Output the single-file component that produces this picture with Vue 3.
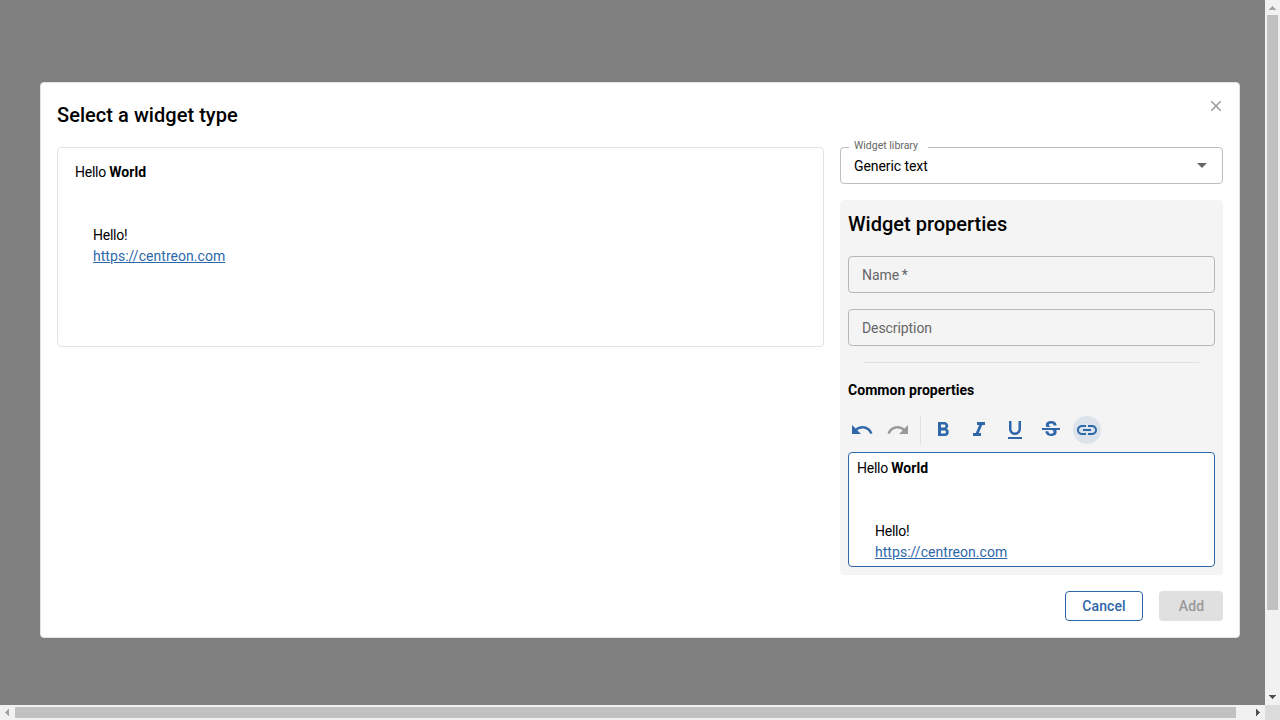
<script setup>
const icons = {
  undo: 'M12.5 8c-2.65 0-5.05.99-6.9 2.6L2 7v9h9l-3.62-3.62c1.39-1.16 3.16-1.88 5.12-1.88 3.54 0 6.55 2.31 7.6 5.5l2.37-.78C21.08 11.03 17.15 8 12.5 8z',
  redo: 'M18.4 10.6C16.55 8.99 14.15 8 11.5 8c-4.65 0-8.58 3.03-9.96 7.22L3.9 16c1.05-3.19 4.05-5.5 7.6-5.5 1.95 0 3.73.72 5.12 1.88L13 16h9V7l-3.6 3.6z',
}
const formats = [
  { name: 'Bold', d: 'M15.6 10.79c.97-.67 1.65-1.77 1.65-2.79 0-2.26-1.75-4-4-4H7v14h7.04c2.09 0 3.71-1.7 3.71-3.79 0-1.52-.86-2.82-2.15-3.42zM10 6.5h3c.83 0 1.5.67 1.5 1.5s-.67 1.5-1.5 1.5h-3v-3zm3.5 9H10v-3h3.5c.83 0 1.5.67 1.5 1.5s-.67 1.5-1.5 1.5z' },
  { name: 'Italic', d: 'M10 4v3h2.21l-3.42 8H6v3h8v-3h-2.21l3.42-8H18V4z' },
  { name: 'Underline', d: 'M12 17c3.31 0 6-2.69 6-6V3h-2.5v8c0 1.93-1.57 3.5-3.5 3.5S8.5 12.93 8.5 11V3H6v8c0 3.31 2.69 6 6 6zm-7 2v2h14v-2H5z' },
  { name: 'Strikethrough', d: 'M6.85 7.08C6.85 4.37 9.45 3 12.24 3c1.64 0 3 .49 3.9 1.28.77.65 1.46 1.73 1.46 3.24h-3.01c0-.31-.05-.59-.15-.85-.29-.86-1.2-1.28-2.25-1.28-1.86 0-2.34 1.02-2.34 1.7 0 .48.25.88.74 1.21.38.25.77.48 1.41.7H7.39c-.21-.34-.54-.89-.54-1.92zM21 12v-2H3v2h9.62c1.15.45 1.96.75 1.96 1.97 0 1-.81 1.67-2.28 1.67-1.54 0-2.93-.54-2.93-2.51H6.4c0 .55.08 1.13.24 1.58.81 2.29 3.29 3.3 5.67 3.3 2.27 0 5.3-.89 5.3-4.05 0-.3-.01-1.16-.48-1.94H21V12z' },
  { name: 'Link', active: true, d: 'M3.9 12c0-1.71 1.39-3.1 3.1-3.1h4V7H7c-2.76 0-5 2.24-5 5s2.24 5 5 5h4v-1.9H7c-1.71 0-3.1-1.39-3.1-3.1zM8 13h8v-2H8v2zm9-6h-4v1.9h4c1.71 0 3.1 1.39 3.1 3.1s-1.39 3.1-3.1 3.1h-4V17h4c2.76 0 5-2.24 5-5s-2.24-5-5-5z' },
]
</script>

<template>
  <div class="screen">
    <main class="backdrop">
      <section class="modal">
        <button class="close" aria-label="Close">
          <svg viewBox="0 0 24 24"><path d="M19 6.41 17.59 5 12 10.59 6.41 5 5 6.41 10.59 12 5 17.59 6.41 19 12 13.41 17.59 19 19 17.59 13.41 12z" /></svg>
        </button>
        <h2 class="title">Select a widget type</h2>
        <div class="content">
          <div class="preview rich">
            <p>Hello <strong>World</strong></p>
            <p class="blank"></p>
            <p class="blank"></p>
            <p class="indent">Hello!</p>
            <p class="indent"><a>https://centreon.com</a></p>
          </div>
          <div class="side">
            <div class="select">
              <span class="label">Widget library</span>
              <span class="value">Generic text</span>
              <svg class="arrow" viewBox="0 0 24 24"><path d="M7 10l5 5 5-5z" /></svg>
            </div>
            <div class="panel">
              <h2 class="panel-title">Widget properties</h2>
              <div class="field">Name<span class="star">&#8201;*</span></div>
              <div class="field">Description</div>
              <hr class="divider" />
              <h3 class="subtitle">Common properties</h3>
              <div class="toolbar">
                <button class="tool" aria-label="Undo"><svg viewBox="0 0 24 24"><path :d="icons.undo" /></svg></button>
                <button class="tool off" aria-label="Redo"><svg viewBox="0 0 24 24"><path :d="icons.redo" /></svg></button>
                <span class="separator"></span>
                <button v-for="f in formats" :key="f.name" class="tool" :class="{ active: f.active }" :aria-label="f.name">
                  <svg viewBox="0 0 24 24"><path :d="f.d" /></svg>
                </button>
              </div>
              <div class="editor rich">
                <p>Hello <strong>World</strong></p>
                <p class="blank"></p>
                <p class="blank"></p>
                <p class="indent">Hello!</p>
                <p class="indent"><a>https://centreon.com</a></p>
              </div>
            </div>
          </div>
        </div>
        <footer class="actions">
          <button class="btn outlined">Cancel</button>
          <button class="btn disabled">Add</button>
        </footer>
      </section>
    </main>
    <div class="bar vertical">
      <svg viewBox="0 0 15 15"><path fill="#a3a3a3" d="M7 6h1v1h1v1h1v1h1v1H4V9h1V8h1V7h1z" /></svg>
      <i class="thumb"></i>
      <svg viewBox="0 0 15 15"><path fill="#505050" d="M4 5h7v1h-1v1H9v1H8v1H7V8H6V7H5V6H4z" /></svg>
    </div>
    <div class="bar horizontal">
      <svg viewBox="0 0 15 15"><path fill="#a3a3a3" d="M9 4v7H8v-1H7V9H6V8H5V7h1V6h1V5h1V4z" /></svg>
      <i class="thumb"></i>
      <svg viewBox="0 0 15 15"><path fill="#505050" d="M6 4v7h1v-1h1V9h1V8h1V7H9V6H8V5H7V4z" /></svg>
    </div>
    <div class="corner"></div>
  </div>
</template>

<style>
html, body { margin: 0; overflow: hidden; }
</style>

<style scoped>
* { box-sizing: border-box; }
.screen {
  display: grid;
  grid-template: 705px 15px / 1265px 15px;
  width: 1280px;
  height: 720px;
  font: 400 14px/21px Roboto, sans-serif;
  color: #000;
}
.backdrop { background: #808080; padding: 82px 0 0 40px; min-width: 0; }
.modal {
  position: relative;
  width: 1200px;
  height: 556px;
  padding: 16px;
  background: #fff;
  border: 1px solid #e3e3e3;
  border-radius: 4px;
}
h2, h3, p { margin: 0; }
button { font-family: inherit; border: 0; padding: 0; background: none; }
svg { display: block; fill: currentColor; }
.close { position: absolute; top: 14px; right: 14px; width: 18px; height: 18px; color: #999; }
.close svg { width: 18px; height: 18px; }
.title, .panel-title { font-size: 20px; font-weight: 500; line-height: 32px; }
.title { margin-bottom: 16px; letter-spacing: .05px; }
.content { display: grid; grid-template-columns: 767px 383px; gap: 16px; align-items: start; }
.preview { height: 200px; padding: 14px 17px; border: 1px solid #e3e3e3; border-radius: 4px; }
.blank { height: 21px; }
.indent { padding-left: 18px; }
.rich { letter-spacing: -.25px; }
.rich strong { font-weight: 700; letter-spacing: .1px; }
.rich a { color: #2e68aa; text-decoration: underline; letter-spacing: .04px; }
.side { display: flex; flex-direction: column; gap: 16px; }
.select {
  position: relative;
  display: flex;
  align-items: center;
  justify-content: space-between;
  height: 37px;
  padding: 0 8px 0 13px;
  border: 1px solid #bdbdbd;
  border-radius: 4px;
}
.value { padding-top: 2px; letter-spacing: -.08px; }
.label {
  position: absolute;
  top: -10px;
  left: 8px;
  width: 79px;
  padding-left: 5px;
  background: #fff;
  font-size: 10.5px;
  line-height: 15px;
  color: #666;
}
.arrow { width: 24px; height: 24px; margin-bottom: 1px; color: #666; }
.panel { height: 375px; padding: 8px; background: #f4f4f4; border-radius: 4px; }
.panel-title { margin-bottom: 16px; }
.field {
  height: 37px;
  margin-bottom: 16px;
  padding: 0 13px;
  border: 1px solid #b7b7b7;
  border-radius: 4px;
  line-height: 36px;
  letter-spacing: -.08px;
  color: #666;
}
.divider { height: 1px; margin: 0 16px 16px; border: 0; background: #e0e0e0; }
.subtitle { padding-top: 1px; font-size: 14px; font-weight: 700; line-height: 21px; letter-spacing: .06px; }
.toolbar { display: flex; align-items: center; height: 28px; margin: 15px 0 8px; gap: 8px; color: #2e68aa; }
.tool { display: flex; align-items: center; justify-content: center; width: 28px; height: 28px; border-radius: 50%; color: #2e68aa; }
.tool svg { width: 24px; height: 24px; }
.tool.off { color: #999; }
.tool.active { background: #dce3eb; }
.separator { width: 1px; height: 28px; background: #e0e0e0; }
.editor { height: 115px; padding: 5px 8px; background: #fff; border: 1px solid #2e68aa; border-radius: 4px; }
.actions { display: flex; justify-content: flex-end; gap: 16px; margin-top: 16px; }
.btn { height: 30px; border-radius: 4px; font-size: 14px; font-weight: 500; line-height: 28px; letter-spacing: .1px; }
.outlined { width: 78px; border: 1px solid #2e68aa; color: #2e68aa; }
.disabled { width: 64px; padding-left: 1px; background: #e0e0e0; color: #999; }
.bar { display: flex; background: #f1f1f1; }
.bar svg { width: 15px; height: 15px; flex: none; }
.bar .thumb { background: #c1c1c1; }
.vertical { flex-direction: column; justify-content: space-between; }
.vertical .thumb { height: 595px; margin: 0 2px auto; }
.horizontal .thumb { width: 1221px; margin: 2px auto 2px 0; }
.corner { background: #dcdcdc; }
</style>
